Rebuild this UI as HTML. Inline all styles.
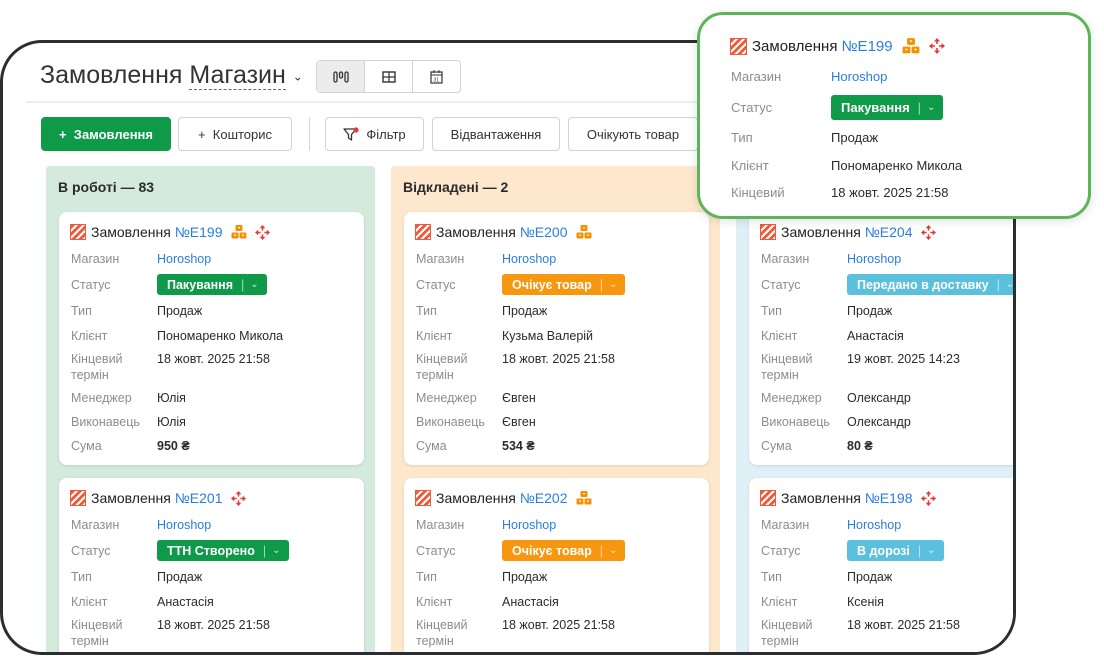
<!DOCTYPE html>
<html><head><meta charset="utf-8"><style>
*{box-sizing:border-box;margin:0;padding:0}
body{width:1104px;height:656px;background:#fff;font-family:"Liberation Sans","DejaVu Sans",sans-serif;position:relative;overflow:hidden;color:#2b2b2b}
.frame{position:absolute;left:0;top:40px;width:1016px;height:615px;border:3px solid #2a2e33;border-radius:42px;overflow:hidden;background:#fff}
.abs{position:absolute}
.btn{position:absolute;top:74px;height:34px;border:1px solid #cfd3d7;border-radius:4px;background:#fff;font-size:13px;color:#333;display:flex;align-items:center;justify-content:center}
.col{position:absolute;top:123px;height:520px;border-radius:4px}
.colh{position:absolute;left:12px;top:13px;font-weight:bold;font-size:14px;color:#2b2b2b}
.card{position:absolute;background:#fff;border-radius:8px;box-shadow:0 1px 3px rgba(0,0,0,.1);height:253px}
.r{position:absolute;font-size:12.5px;line-height:16px;white-space:nowrap}
.l{color:#8a8d91}
.v{color:#2b2b2b}
.lk{color:#2a7de1}
.t{position:absolute;top:12px;left:11px;font-size:14px;display:flex;align-items:center;white-space:nowrap;color:#222}
.ic{width:16px;height:16px;background:repeating-linear-gradient(135deg,#f05a3a 0 3px,#fff 3px 5px);border:1.5px solid #f05a3a;margin-right:5px}
.num{color:#2a7de1;margin-left:4px}
.bx,.mv{margin-left:8px;display:block}
.st{position:absolute;height:21px;border-radius:3px;color:#fff;font-weight:bold;font-size:12.5px;display:flex;align-items:center;padding:0 8px 0 10px;white-space:nowrap}
.st i{font-style:normal;opacity:.6;margin:0 6px 0 8px;font-weight:normal}
.st b{font-weight:normal;font-size:10px;opacity:.8}
</style></head><body>
<svg width="0" height="0" style="position:absolute">
<symbol id="bx" viewBox="0 0 16 16"><rect x="4.5" y="1" width="7" height="6" rx="1" fill="#f39200"/><rect x="0.5" y="8.5" width="7" height="6" rx="1" fill="#f39200"/><rect x="8.5" y="8.5" width="7" height="6" rx="1" fill="#f39200"/><rect x="7" y="3" width="2" height="1.2" fill="#fff"/><rect x="3" y="10.5" width="2" height="1.2" fill="#fff"/><rect x="11" y="10.5" width="2" height="1.2" fill="#fff"/></symbol>
<symbol id="mv" viewBox="0 0 16 16"><path d="M8 0L11 3.5H5ZM8 16L5 12.5H11ZM0 8L3.5 5V11ZM16 8L12.5 11V5Z" fill="#e53935"/><path d="M8 3V6M8 10V13M3 8H6M10 8H13" stroke="#e53935" stroke-width="1.6"/></symbol>
</svg>
<div class="frame">
 <div class="abs" style="left:37px;top:18px;font-size:25px;color:#333;font-weight:300">Замовлення <span style="border-bottom:1px dashed #666">Магазин</span> <span style="font-size:12px;vertical-align:middle">⌄</span></div>
 <div class="abs" style="left:313px;top:17px;width:145px;height:33px;border:1px solid #cfd3d7;border-radius:4px;display:flex">
  <div style="width:48px;background:#ececec;border-right:1px solid #cfd3d7;display:flex;align-items:center;justify-content:center"><svg width="16" height="12"><rect x="1" y="1" width="3" height="10" rx="1.5" fill="none" stroke="#333" stroke-width="1.3"/><rect x="6.5" y="1" width="3" height="6" rx="1.5" fill="none" stroke="#333" stroke-width="1.3"/><rect x="12" y="1" width="3" height="10" rx="1.5" fill="none" stroke="#333" stroke-width="1.3"/></svg></div>
  <div style="width:48px;border-right:1px solid #cfd3d7;display:flex;align-items:center;justify-content:center"><svg width="14" height="12"><rect x="1" y="1" width="12" height="10" fill="none" stroke="#333" stroke-width="1.4"/><path d="M1 6H13M7 1V11" stroke="#333" stroke-width="1.2"/></svg></div>
  <div style="flex:1;display:flex;align-items:center;justify-content:center"><svg width="13" height="14"><rect x="1" y="2" width="11" height="11" fill="none" stroke="#333" stroke-width="1.2"/><path d="M4 0V3M9 0V3M1 5H12" stroke="#333"/><text x="3.5" y="11.5" font-size="5" fill="#333">31</text></svg></div>
 </div>
 <div class="abs" style="left:23px;top:58px;width:1000px;height:2px;background:#eceeef"></div>
 <div class="btn" style="left:38px;width:130px;background:#0f9a4a;border-color:#0f9a4a;color:#fff;font-weight:600">+&nbsp; Замовлення</div>
 <div class="btn" style="left:175px;width:114px">+&nbsp; Кошторис</div>
 <div class="abs" style="left:306px;top:74px;width:1px;height:34px;background:#d5d8db"></div>
 <div class="btn" style="left:322px;width:99px"><svg width="16" height="14" style="margin-right:7px"><path d="M1 2H13L8.5 7.5V13L5.5 11V7.5Z" fill="none" stroke="#333" stroke-width="1.3" stroke-linejoin="round"/><circle cx="13" cy="3" r="2.6" fill="#e53935"/></svg>Фільтр</div>
 <div class="btn" style="left:429px;width:128px">Відвантаження</div>
 <div class="btn" style="left:565px;width:130px">Очікують товар</div>

 <div class="col" style="left:43px;width:329px;background:#d3eadd"><div class="colh">В роботі — 83</div></div>
 <div class="col" style="left:388px;width:329px;background:#fde7cd"><div class="colh">Відкладені — 2</div></div>
 <div class="col" style="left:733px;width:329px;background:#dff0f7"></div>

 <div class="card" style="left:56px;top:169px;width:305px">
  <div class="t"><span class="ic"></span>Замовлення<span class="num">№E199</span><svg class="bx" width="16" height="16"><use href="#bx"/></svg><svg class="mv" width="15" height="15"><use href="#mv"/></svg></div>
  <div class="r l" style="left:12px;top:39px">Магазин</div><div class="r lk" style="left:98px;top:39px">Horoshop</div>
  <div class="r l" style="left:12px;top:65px">Статус</div><div class="st" style="left:98px;top:62px;background:#0f9a4a">Пакування<i>|</i><b>⌄</b></div>
  <div class="r l" style="left:12px;top:91px">Тип</div><div class="r v" style="left:98px;top:91px">Продаж</div>
  <div class="r l" style="left:12px;top:116px">Клієнт</div><div class="r v" style="left:98px;top:116px">Пономаренко Микола</div>
  <div class="r l" style="left:12px;top:139px">Кінцевий<br>термін</div><div class="r v" style="left:98px;top:139px">18 жовт. 2025 21:58</div>
  <div class="r l" style="left:12px;top:178px">Менеджер</div><div class="r v" style="left:98px;top:178px">Юлія</div>
  <div class="r l" style="left:12px;top:202px">Виконавець</div><div class="r v" style="left:98px;top:202px">Юлія</div>
  <div class="r l" style="left:12px;top:226px">Сума</div><div class="r v" style="left:98px;top:226px;font-weight:bold">950 ₴</div>
 </div>
 <div class="card" style="left:56px;top:435px;width:305px">
  <div class="t"><span class="ic"></span>Замовлення<span class="num">№E201</span><svg class="mv" width="15" height="15"><use href="#mv"/></svg></div>
  <div class="r l" style="left:12px;top:39px">Магазин</div><div class="r lk" style="left:98px;top:39px">Horoshop</div>
  <div class="r l" style="left:12px;top:65px">Статус</div><div class="st" style="left:98px;top:62px;background:#0f9a4a">ТТН Створено<i>|</i><b>⌄</b></div>
  <div class="r l" style="left:12px;top:91px">Тип</div><div class="r v" style="left:98px;top:91px">Продаж</div>
  <div class="r l" style="left:12px;top:116px">Клієнт</div><div class="r v" style="left:98px;top:116px">Анастасія</div>
  <div class="r l" style="left:12px;top:139px">Кінцевий<br>термін</div><div class="r v" style="left:98px;top:139px">18 жовт. 2025 21:58</div>
 </div>

 <div class="card" style="left:401px;top:169px;width:305px">
  <div class="t"><span class="ic"></span>Замовлення<span class="num">№E200</span><svg class="bx" width="16" height="16"><use href="#bx"/></svg></div>
  <div class="r l" style="left:12px;top:39px">Магазин</div><div class="r lk" style="left:98px;top:39px">Horoshop</div>
  <div class="r l" style="left:12px;top:65px">Статус</div><div class="st" style="left:98px;top:62px;background:#f7960f">Очікує товар<i>|</i><b>⌄</b></div>
  <div class="r l" style="left:12px;top:91px">Тип</div><div class="r v" style="left:98px;top:91px">Продаж</div>
  <div class="r l" style="left:12px;top:116px">Клієнт</div><div class="r v" style="left:98px;top:116px">Кузьма Валерій</div>
  <div class="r l" style="left:12px;top:139px">Кінцевий<br>термін</div><div class="r v" style="left:98px;top:139px">18 жовт. 2025 21:58</div>
  <div class="r l" style="left:12px;top:178px">Менеджер</div><div class="r v" style="left:98px;top:178px">Євген</div>
  <div class="r l" style="left:12px;top:202px">Виконавець</div><div class="r v" style="left:98px;top:202px">Євген</div>
  <div class="r l" style="left:12px;top:226px">Сума</div><div class="r v" style="left:98px;top:226px;font-weight:bold">534 ₴</div>
 </div>
 <div class="card" style="left:401px;top:435px;width:305px">
  <div class="t"><span class="ic"></span>Замовлення<span class="num">№E202</span><svg class="bx" width="16" height="16"><use href="#bx"/></svg></div>
  <div class="r l" style="left:12px;top:39px">Магазин</div><div class="r lk" style="left:98px;top:39px">Horoshop</div>
  <div class="r l" style="left:12px;top:65px">Статус</div><div class="st" style="left:98px;top:62px;background:#f7960f">Очікує товар<i>|</i><b>⌄</b></div>
  <div class="r l" style="left:12px;top:91px">Тип</div><div class="r v" style="left:98px;top:91px">Продаж</div>
  <div class="r l" style="left:12px;top:116px">Клієнт</div><div class="r v" style="left:98px;top:116px">Анастасія</div>
  <div class="r l" style="left:12px;top:139px">Кінцевий<br>термін</div><div class="r v" style="left:98px;top:139px">18 жовт. 2025 21:58</div>
 </div>

 <div class="card" style="left:746px;top:169px;width:305px">
  <div class="t"><span class="ic"></span>Замовлення<span class="num">№E204</span><svg class="mv" width="15" height="15"><use href="#mv"/></svg></div>
  <div class="r l" style="left:12px;top:39px">Магазин</div><div class="r lk" style="left:98px;top:39px">Horoshop</div>
  <div class="r l" style="left:12px;top:65px">Статус</div><div class="st" style="left:98px;top:62px;background:#5bc0de">Передано в доставку<i>|</i><b>⌄</b></div>
  <div class="r l" style="left:12px;top:91px">Тип</div><div class="r v" style="left:98px;top:91px">Продаж</div>
  <div class="r l" style="left:12px;top:116px">Клієнт</div><div class="r v" style="left:98px;top:116px">Анастасія</div>
  <div class="r l" style="left:12px;top:139px">Кінцевий<br>термін</div><div class="r v" style="left:98px;top:139px">19 жовт. 2025 14:23</div>
  <div class="r l" style="left:12px;top:178px">Менеджер</div><div class="r v" style="left:98px;top:178px">Олександр</div>
  <div class="r l" style="left:12px;top:202px">Виконавець</div><div class="r v" style="left:98px;top:202px">Олександр</div>
  <div class="r l" style="left:12px;top:226px">Сума</div><div class="r v" style="left:98px;top:226px;font-weight:bold">80 ₴</div>
 </div>
 <div class="card" style="left:746px;top:435px;width:305px">
  <div class="t"><span class="ic"></span>Замовлення<span class="num">№E198</span><svg class="mv" width="15" height="15"><use href="#mv"/></svg></div>
  <div class="r l" style="left:12px;top:39px">Магазин</div><div class="r lk" style="left:98px;top:39px">Horoshop</div>
  <div class="r l" style="left:12px;top:65px">Статус</div><div class="st" style="left:98px;top:62px;background:#5bc0de">В дорозі<i>|</i><b>⌄</b></div>
  <div class="r l" style="left:12px;top:91px">Тип</div><div class="r v" style="left:98px;top:91px">Продаж</div>
  <div class="r l" style="left:12px;top:116px">Клієнт</div><div class="r v" style="left:98px;top:116px">Ксенія</div>
  <div class="r l" style="left:12px;top:139px">Кінцевий<br>термін</div><div class="r v" style="left:98px;top:139px">18 жовт. 2025 21:58</div>
 </div>
</div>

<div class="abs" style="left:697px;top:12px;width:394px;height:207px;border:3px solid #5db55a;border-radius:26px;background:#fff;box-shadow:0 2px 10px rgba(0,0,0,.12)">
 <div class="t" style="left:30px;top:22px;font-size:15px"><span class="ic" style="width:17px;height:17px"></span>Замовлення<span class="num">№E199</span><svg class="bx" width="18" height="18" style="margin-left:9px"><use href="#bx"/></svg><svg class="mv" width="16" height="16" style="margin-left:9px"><use href="#mv"/></svg></div>
 <div class="r l" style="left:31px;top:54px;font-size:13px">Магазин</div><div class="r lk" style="left:131px;top:54px;font-size:13px">Horoshop</div>
 <div class="r l" style="left:31px;top:85px;font-size:13px">Статус</div><div class="st" style="left:131px;top:80px;height:25px;background:#0f9a4a;font-size:13px">Пакування<i>|</i><b>⌄</b></div>
 <div class="r l" style="left:31px;top:115px;font-size:13px">Тип</div><div class="r v" style="left:131px;top:115px;font-size:13px">Продаж</div>
 <div class="r l" style="left:31px;top:143px;font-size:13px">Клієнт</div><div class="r v" style="left:131px;top:143px;font-size:13px">Пономаренко Микола</div>
 <div class="r l" style="left:31px;top:170px;font-size:13px">Кінцевий</div><div class="r v" style="left:131px;top:170px;font-size:13px">18 жовт. 2025 21:58</div>
</div>
</body></html>
